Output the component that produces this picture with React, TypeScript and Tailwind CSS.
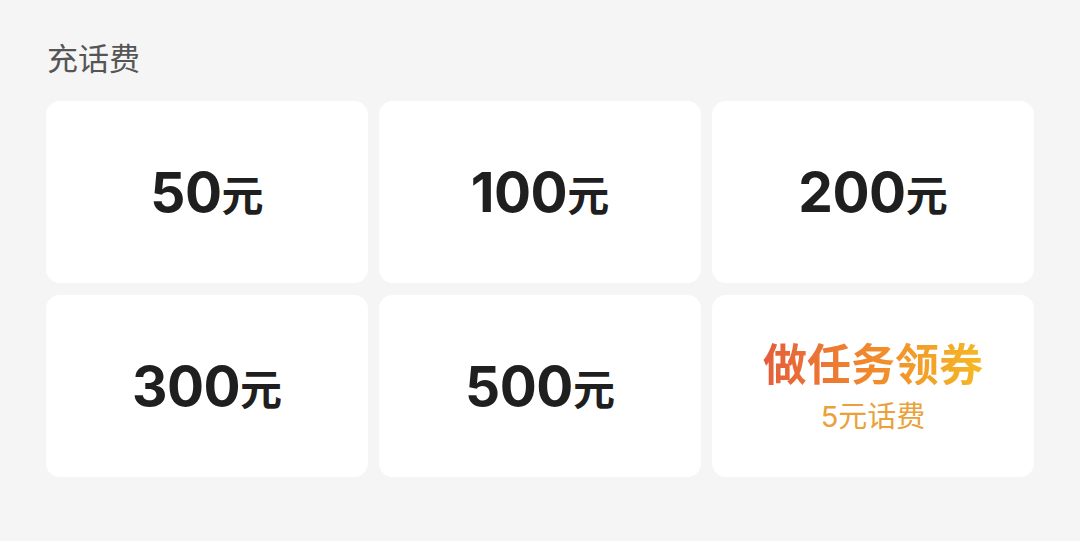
import React from "react";

const amounts = ["50", "100", "200", "300", "500"];

function AmountCard({ value }: { value: string }) {
  return (
    <div className="h-[182px] bg-white rounded-[14px] flex items-center justify-center text-[#1f1f1f]">
      <span className="font-bold text-[55px] leading-none tracking-[-0.5px] [font-family:Inter,'Noto_Sans_CJK_SC',sans-serif]">
        {value}
      </span>
      <span className="font-bold text-[42px] leading-none mt-[1px] [font-family:'Noto_Sans_CJK_SC',sans-serif]">
        元
      </span>
    </div>
  );
}

export default function App() {
  return (
    <div className="w-[1080px] h-[541px] bg-[#f5f5f5] px-[46px] pt-[36px] [font-family:'Noto_Sans_CJK_SC',sans-serif]">
      <div className="text-[31px] leading-[42px] text-[#555555] pl-[1px]">充话费</div>
      <div className="grid grid-cols-3 gap-x-[11px] gap-y-[12px] mt-[23px]">
        {amounts.map((a) => (
          <AmountCard key={a} value={a} />
        ))}
        <div className="h-[182px] bg-white rounded-[14px] flex flex-col items-center justify-center">
          <span className="font-bold text-[44px] leading-[46px] bg-gradient-to-r from-[#e55d3a] via-[#f08a2c] to-[#f4b923] bg-clip-text text-transparent">
            做任务领券
          </span>
          <span className="text-[29px] leading-[34px] mt-[12px] text-[#eaa13a]">
            <span className="[font-family:Inter,sans-serif]">5</span>元话费
          </span>
        </div>
      </div>
    </div>
  );
}
